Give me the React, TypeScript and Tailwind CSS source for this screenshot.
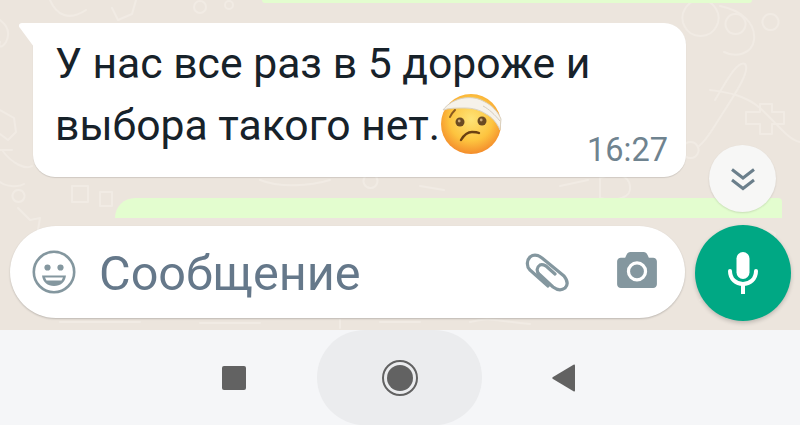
// faint doodles of the chat wallpaper
function Wallpaper() {
  return (
    <svg className="absolute inset-0" width="800" height="330" viewBox="0 0 800 330" fill="none" stroke="#f1ebe4" strokeWidth="2" strokeLinecap="round" strokeLinejoin="round">
      <path d="M50 0c6 14 18 22 36 10" />
      <path d="M112 8l6 12 14-6 4-14" />
      <circle cx="200" cy="7" r="6" />
      <circle cx="229" cy="5" r="4" />
      <path d="M0 20c8 6 10 14 6 22-4 6-8 6-6 0" />
      <path d="M0 110l14 8 2 14-8 8-8-6M0 150h12" />
      <path d="M2 150c10 14 24 20 30 16" />
      <path d="M0 182c4 4 18 6 24 2M18 190a6 6 0 1 0 1 0z" />
      <path d="M72 186h16v16H72zM100 192h12v14h-12z" />
      <path d="M18 208l12 12 10-2-2 12" />
      <path d="M620 70c4-14 14-26 22-12 4 10-4 22-12 30" />
      <path d="M700 36a18 18 0 1 1 1 0zM720 6c20 4 36 16 34 34-2 14-18 18-30 12" />
      <path d="M735 34a10 10 0 1 1 1 0zM770 30a8 8 0 1 1 1 0z" />
      <path d="M715 100c10-16 22-40 30-36 6 6-10 30-24 52-8 12-14 24-22 30" />
      <path d="M746 112h14v-8h12v8h12v12h-12v10h-12v-10h-14z" />
      <path d="M710 90c14 2 34 4 50 18s28 32 40 34" />
      <path d="M690 158a8 8 0 1 1 1 0z" />
      <path d="M560 186l28-6M600 178c16-6 28-4 30 8s-14 16-30 12z" />
      <path d="M260 180c20 8 50 6 70 0M370 188a7 7 0 1 1 1 0zM420 186l24 4" />
      <path d="M745 238c16-8 22-10 30-4-2 20-14 30-34 36" />
      <path d="M772 290a12 12 0 1 1 1 0zM700 300c20-12 30-8 40 6" />
      <path d="M60 322h80M200 323h60M340 320v8M380 322h40M470 322c20-6 30 0 60 2" />
    </svg>
  );
}

// head bandage emoji, drawn because no colour emoji font is available
function BandageEmoji() {
  return (
    <svg width="62" height="62" viewBox="0 0 62 62" className="absolute left-[440px] top-[93px]">
      <defs>
        <radialGradient id="face" cx="0.5" cy="0.42" r="0.6">
          <stop offset="0" stopColor="#fee477" />
          <stop offset="0.6" stopColor="#fdc43f" />
          <stop offset="1" stopColor="#f3882a" />
        </radialGradient>
      </defs>
      <circle cx="31" cy="31" r="30" fill="url(#face)" />
      <path d="M3 17C8 10 17 6 24 5c7-1 14 0 19 3 9 4 15 11 18 18l-1 11c-3-7-8-13-14-16-6-4-13-6-21-6-8 0-16 0-22 2z" fill="#f6f2ea" stroke="#d9d1c2" strokeWidth="1" />
      <path d="M43 13c6 3 12 9 17 15" stroke="#d5cdbf" strokeWidth="1" fill="none" />
      <path d="M10 24c1-3 3-5 5-7" stroke="#8a5a20" strokeWidth="2" fill="none" strokeLinecap="round" />
      <circle cx="20" cy="29" r="4.500" fill="#6b4a22" />
      <circle cx="19.200" cy="28" r="1.400" fill="#c9a878" />
      <circle cx="42" cy="28" r="4.500" fill="#6b4a22" />
      <circle cx="41.200" cy="27" r="1.400" fill="#c9a878" />
      <path d="M21 47c3-5 7-8 11-8 3 0 5 0 7 1" stroke="#6b4012" strokeWidth="2.400" fill="none" strokeLinecap="round" />
    </svg>
  );
}

export default function App() {
  return (
    <div className="w-[800px] h-[425px] overflow-hidden flex flex-col font-['Roboto',sans-serif]">
      <div className="relative h-[330px] bg-[#ece5dd] flex flex-col">
        <Wallpaper />

        <div className="relative h-[3px] w-[490px] ml-[262px] bg-[#e3fdcf] rounded-b-[8px]" />

        {/* incoming message */}
        <div className="relative mt-[20px] ml-[33px] w-[653px] h-[154px] bg-white rounded-[22px] rounded-tl-none shadow-[0_1px_1px_rgba(0,0,0,0.12)]">
          <svg width="16" height="24" viewBox="0 0 16 24" className="absolute left-[-15px] top-0">
            <path d="M16 0H4C1 0 0 3 2 5l14 19z" fill="#fff" />
          </svg>
          <p className="pl-[22px] pt-[9px] text-[42.700px] leading-[62px] text-[#17222a]">
            У нас все раз в 5 дороже и
            <br />
            выбора такого нет.
          </p>
          <span className="absolute right-[18px] bottom-[8px] text-[32.500px] leading-[38px] text-[#6f838f]">16:27</span>
        </div>
        <div className="absolute left-0 top-0 pointer-events-none">
          <BandageEmoji />
        </div>

        {/* outgoing message, cut off by the input */}
        <div className="relative mt-[21px] ml-[115px] w-[667px] h-[20px] bg-[#e3fdcf] rounded-tl-[20px] rounded-tr-[4px]" />

        {/* composer */}
        <div className="relative mt-[7px] ml-[10px] flex items-start gap-[10px]">
          <div className="mt-[1px] w-[675px] h-[92px] bg-white rounded-[46px] shadow-[0_1px_2px_rgba(0,0,0,0.2)] flex items-center pl-[22px]">
            <svg width="44" height="44" viewBox="0 0 44 44" fill="none">
              <circle cx="22" cy="22" r="20.200" stroke="#84979f" strokeWidth="2.600" />
              <circle cx="15.500" cy="17.500" r="3.100" fill="#84979f" />
              <circle cx="28.500" cy="17.500" r="3.100" fill="#84979f" />
              <path d="M10 25.500h24c-.8 6.500-5.500 10.500-12 10.500s-11.200-4-12-10.500z" fill="#84979f" />
              <path d="M13 27.500h18l-1.500 3h-15z" fill="#fff" />
            </svg>
            <span className="ml-[23px] mt-[4px] text-[48.600px] leading-[56px] text-[#65788a]">Сообщение</span>
            <svg width="60" height="55" viewBox="0 0 60 55" fill="none" stroke="#84979f" strokeWidth="3.200" strokeLinecap="round" strokeLinejoin="round" className="ml-auto">
              <path d="M33 41 15 25C11 21 12 15 15 12c4-3 8-2 12 1l22 18c4 5 4 9 1 12-4 3-8 2-12-1L24 29c-3-3-2-7 1-9 2-1 4 0 6 1l9 8" />
            </svg>
            <svg width="40" height="36" viewBox="0 0 42 38" className="ml-[42px] mr-[28px] mb-[4px]">
              <path d="M14 0h14c2 0 3 1 4 3l1.500 3H38c2.200 0 4 1.800 4 4v24c0 2.200-1.800 4-4 4H4c-2.200 0-4-1.800-4-4V10c0-2.200 1.800-4 4-4h4.500L10 3c1-2 2-3 4-3z" fill="#84979f" />
              <circle cx="21" cy="20.500" r="9" fill="none" stroke="#fff" strokeWidth="3.400" />
            </svg>
          </div>
          <div className="w-[96px] h-[96px] rounded-full bg-[#00a884] shadow-[0_2px_4px_rgba(0,0,0,0.2)] flex items-center justify-center">
            <svg width="32" height="44" viewBox="0 0 32 44">
              <rect x="9.500" y="1" width="13" height="27" rx="6.500" fill="#fff" />
              <path d="M3 20c0 8 6 13 13 13s13-5 13-13" fill="none" stroke="#fff" strokeWidth="4" strokeLinecap="round" />
              <rect x="14" y="32" width="4" height="11" fill="#fff" />
            </svg>
          </div>
        </div>

        {/* scroll to bottom */}
        <div className="absolute left-[709px] top-[145px] w-[67px] h-[67px] rounded-full bg-[#f7f7f6] shadow-[0_1px_2px_rgba(0,0,0,0.12)] flex items-center justify-center">
          <svg width="26" height="24" viewBox="0 0 26 24" fill="none" stroke="#6b7f8b" strokeWidth="3">
            <path d="M2 2.500 13 11 24 2.500M2 13l11 8.500L24 13" />
          </svg>
        </div>
      </div>

      {/* android navigation bar */}
      <div className="h-[95px] bg-[#f5f6f8] flex items-center justify-center pr-[2px]">
        <div className="w-[24px] h-[24px] rounded-[2px] bg-[#626262]" />
        <div className="ml-[71px] mr-[70px] w-[165px] h-[95px] rounded-[48px] bg-[#ebecee] flex items-center justify-center">
          <div className="w-[36px] h-[36px] rounded-full border-[2px] border-[#626262] flex items-center justify-center">
            <div className="w-[26px] h-[26px] rounded-full bg-[#626262]" />
          </div>
        </div>
        <svg width="24" height="28" viewBox="0 0 24 28">
          <path d="M23 1.500v25a1 1 0 0 1-1.500.8L1 15a1.200 1.200 0 0 1 0-2L21.500.700A1 1 0 0 1 23 1.500z" fill="#626262" />
        </svg>
      </div>
    </div>
  );
}
